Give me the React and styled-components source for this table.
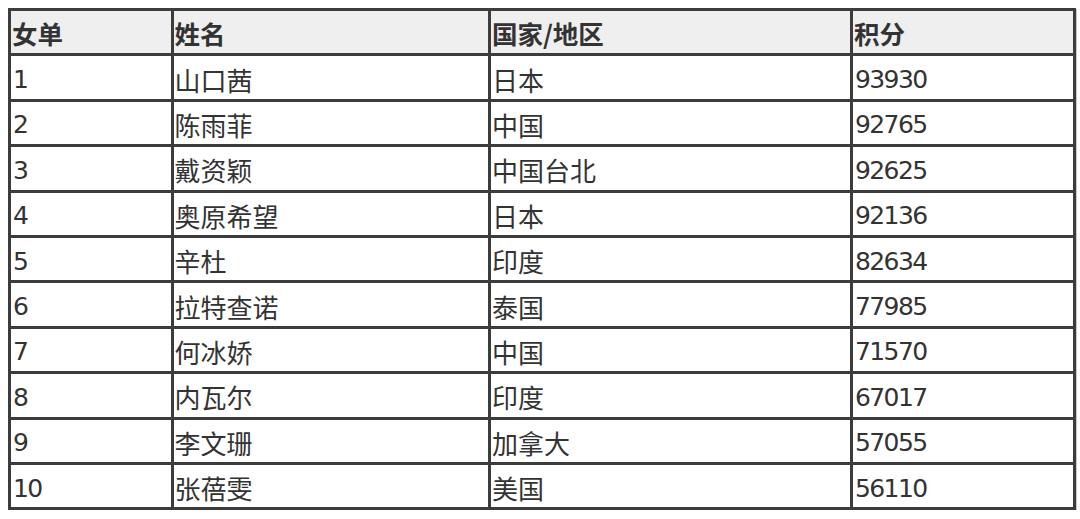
import styled, { createGlobalStyle } from 'styled-components';

const GlobalStyle = createGlobalStyle`
    body {
        margin: 8px 0 0 8px;
        background: #fff;
        font-family: "DejaVu Sans", "Noto Sans CJK SC", sans-serif;
        color: #333;
    }
`;

const Table = styled.table`
    width: 1065px;
    border-collapse: collapse;
    table-layout: fixed;
    box-shadow: 1px 1px 0 #c8c8c8;
`;

const HeadCell = styled.th`
    height: 41.4px;
    padding: 1px 0 0 1px;
    border: 3px solid #3c3c3c;
    background: #efefef;
    text-align: left;
    font-family: "Noto Sans CJK SC", sans-serif;
    font-size: 25.5px;
    font-weight: 700;
    color: #333;
    line-height: 1;
`;

const Cell = styled.td`
    height: 38.4px;
    padding: 4px 0 0 ${p => (p.$numeric ? '2px' : '1px')};
    border: 3px solid #3c3c3c;
    font-family: ${p => (p.$numeric ? '"DejaVu Sans", sans-serif' : '"Noto Sans CJK SC", sans-serif')};
    font-size: ${p => (p.$numeric ? '25px' : '26px')};
    letter-spacing: ${p => (p.$numeric ? '-1.6px' : '0')};
    color: #333;
    line-height: 1;
    white-space: nowrap;
`;

const rows = [
    ['1', '山口茜', '日本', '93930'],
    ['2', '陈雨菲', '中国', '92765'],
    ['3', '戴资颖', '中国台北', '92625'],
    ['4', '奥原希望', '日本', '92136'],
    ['5', '辛杜', '印度', '82634'],
    ['6', '拉特查诺', '泰国', '77985'],
    ['7', '何冰娇', '中国', '71570'],
    ['8', '内瓦尔', '印度', '67017'],
    ['9', '李文珊', '加拿大', '57055'],
    ['10', '张蓓雯', '美国', '56110'],
];

const App = () => {
    return (
        <>
            <GlobalStyle />
            <Table>
                <colgroup>
                    <col style={{ width: 162.5 }} />
                    <col style={{ width: 317.5 }} />
                    <col style={{ width: 362 }} />
                    <col style={{ width: 223 }} />
                </colgroup>
                <thead>
                    <tr>
                        <HeadCell>女单</HeadCell>
                        <HeadCell>姓名</HeadCell>
                        <HeadCell>国家/地区</HeadCell>
                        <HeadCell>积分</HeadCell>
                    </tr>
                </thead>
                <tbody>
                    {rows.map(r => (
                        <tr key={r[0]}>
                            <Cell $numeric>{r[0]}</Cell>
                            <Cell>{r[1]}</Cell>
                            <Cell>{r[2]}</Cell>
                            <Cell $numeric>{r[3]}</Cell>
                        </tr>
                    ))}
                </tbody>
            </Table>
        </>
    );
};

export default App;
